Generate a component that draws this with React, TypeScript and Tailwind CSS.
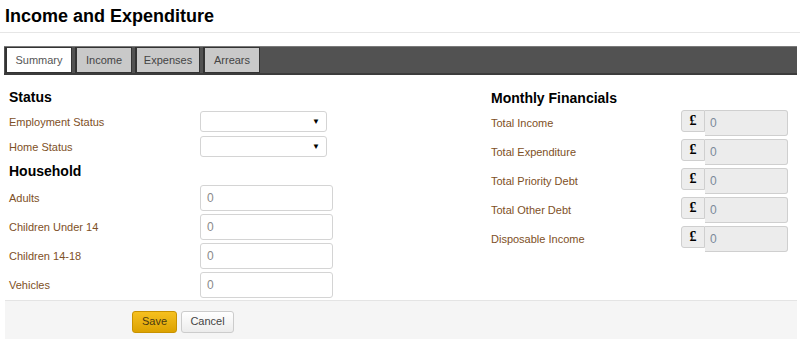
import { ReactNode } from "react";

const tabs = [
  { name: "Summary", w: "w-[67px]" },
  { name: "Income", w: "w-[57px]" },
  { name: "Expenses", w: "w-[65px]" },
  { name: "Arrears", w: "w-[57px]" },
];

const household = ["Adults", "Children Under 14", "Children 14-18", "Vehicles"];

const financials = [
  "Total Income",
  "Total Expenditure",
  "Total Priority Debt",
  "Total Other Debt",
  "Disposable Income",
];

const Label = ({ children, w }: { children: ReactNode; w: string }) => (
  <div className={`${w} text-[11px] leading-[14px] text-[#7e5026]`}>{children}</div>
);

const SelectBox = () => (
  <div className="w-[127px] h-[21px] border border-[#d4d4d4] rounded-[3px] bg-white flex items-center justify-end pr-[6px]">
    <span className="text-[8px] text-black leading-none">▼</span>
  </div>
);

const NumberBox = () => (
  <div className="w-[133px] h-[26px] border border-[#d4d4d4] rounded-[3px] bg-white flex items-center pl-[6px] text-[12px] leading-none text-[#8a8a8a]">
    0
  </div>
);

const MoneyBox = () => (
  <div className="flex items-start">
    <div className="w-[24px] h-[22px] border border-[#cfcfcf] rounded-l-[3px] bg-[#ededed] flex items-center justify-center text-[14px] leading-none font-bold text-black font-['Liberation_Serif',serif]">
      £
    </div>
    <div className="w-[83px] h-[26px] border border-l-0 border-[#cfcfcf] rounded-r-[3px] bg-[#ececec] flex items-center pl-[5px] text-[12px] leading-none text-[#7b8a9a]">
      0
    </div>
  </div>
);

const App = () => {
  return (
    <div className="w-[800px] h-[339px] bg-white overflow-hidden font-['Liberation_Sans',Arial,sans-serif] text-[#333]">
      <div className="h-[33px] border-b border-[#e6e6e6] pl-[5px] flex items-center">
        <h1 className="text-[18px] font-bold text-black leading-none">Income and Expenditure</h1>
      </div>

      <div className="mt-[13px] ml-[4px] mr-[3px] h-[29px] bg-[#525252] border-t border-[#7a7a7a] border-b-2 border-b-[#3c3c3c] flex items-stretch gap-[3px] pl-[1px]">
        {tabs.map((t, i) => (
          <div
            key={t.name}
            className={`${t.w} border border-[#333] border-l-2 flex items-center justify-center text-[11px] leading-none ${
              i === 0 ? "bg-white text-[#555]" : "bg-[#c9c9c9] text-[#444]"
            }`}
          >
            {t.name}
          </div>
        ))}
      </div>

      <div className="flex h-[225px]">
        <div className="w-[491px] pl-[9px] pt-[14px]">
          <h2 className="h-[22px] text-[14px] font-bold text-black leading-[16px]">Status</h2>
          <div className="flex flex-col gap-[4px]">
            {["Employment Status", "Home Status"].map((l) => (
              <div key={l} className="flex items-center">
                <Label w="w-[191px]">{l}</Label>
                <SelectBox />
              </div>
            ))}
          </div>
          <h2 className="h-[28px] flex items-center text-[14px] font-bold text-black">Household</h2>
          <div className="flex flex-col gap-[3px]">
            {household.map((l) => (
              <div key={l} className="flex items-center">
                <Label w="w-[191px]">{l}</Label>
                <NumberBox />
              </div>
            ))}
          </div>
        </div>

        <div className="flex-1 pt-[14px]">
          <h2 className="h-[21px] text-[14px] font-bold text-black leading-[18px]">Monthly Financials</h2>
          <div className="flex flex-col gap-[3px]">
            {financials.map((l) => (
              <div key={l} className="flex items-center">
                <Label w="w-[190px]">{l}</Label>
                <MoneyBox />
              </div>
            ))}
          </div>
        </div>
      </div>

      <div className="ml-[5px] mr-[3px] h-[39px] bg-[#f5f5f5] border-t border-[#e4e4e4] flex items-center pl-[127px] gap-[4px] pt-[3px]">
        <button className="w-[45px] h-[22px] rounded-[3px] border border-[#c89200] bg-gradient-to-b from-[#f6c01e] to-[#dca200] text-[11px] text-[#4a3a10]">
          Save
        </button>
        <button className="w-[53px] h-[22px] rounded-[3px] border border-[#cccccc] bg-gradient-to-b from-white to-[#ececec] text-[11px] text-[#444]">
          Cancel
        </button>
      </div>
    </div>
  );
};

export default App;
